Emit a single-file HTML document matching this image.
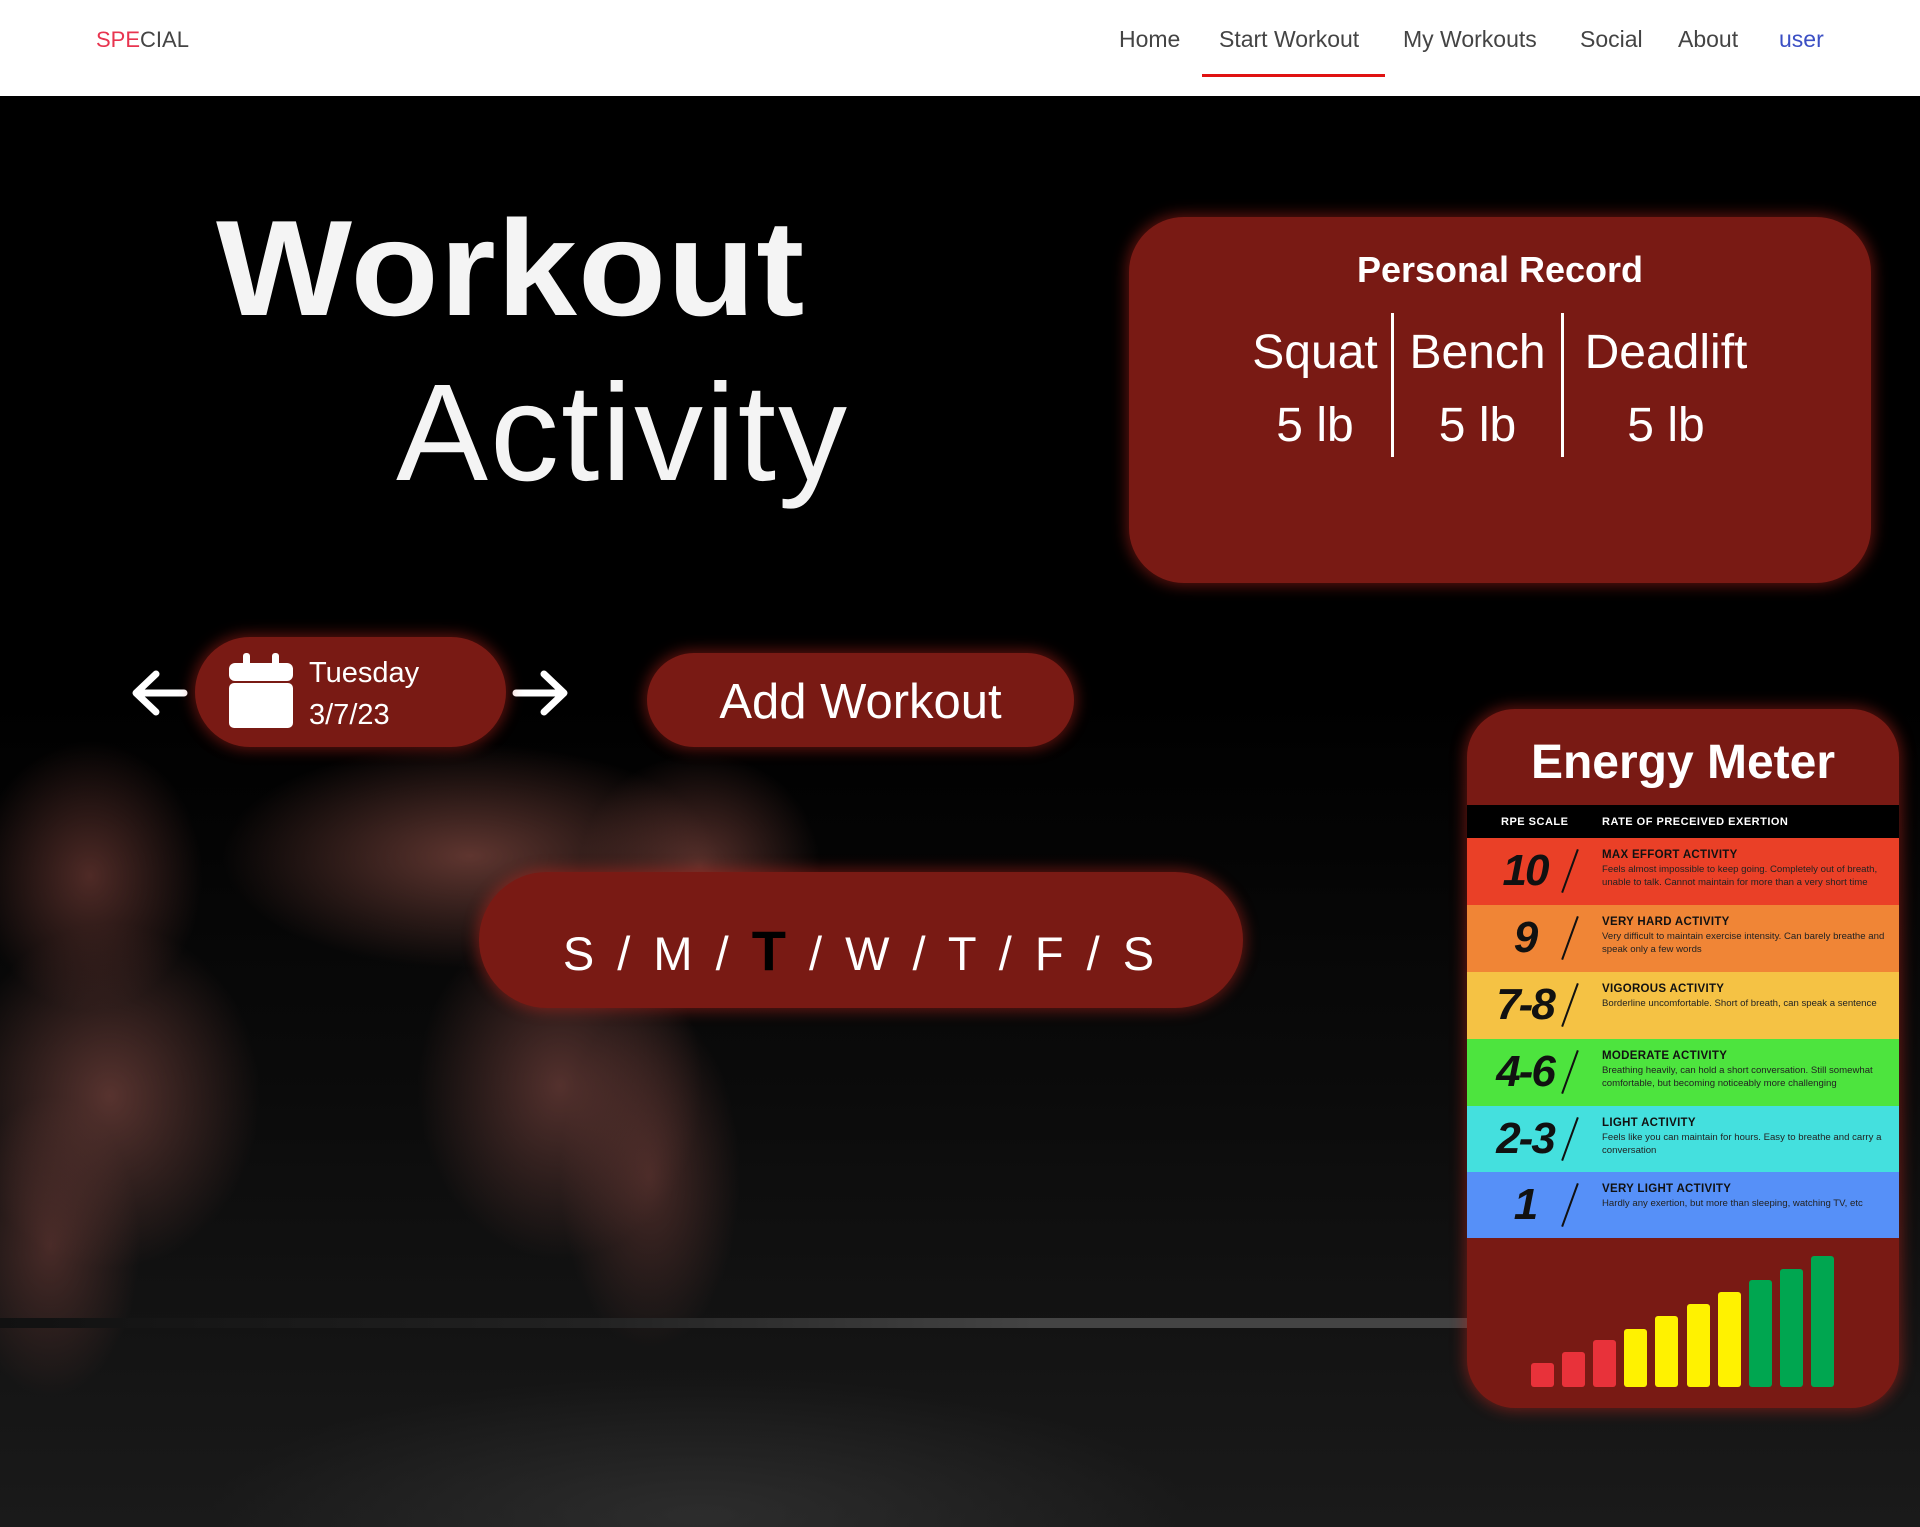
<!DOCTYPE html>
<html><head><meta charset="utf-8">
<style>
*{margin:0;padding:0;box-sizing:border-box}
body{width:1920px;height:1527px;overflow:hidden;font-family:"Liberation Sans",sans-serif;background:#000;position:relative}
.a{position:absolute}
nav{position:absolute;left:0;top:0;width:1920px;height:96px;background:#fff}
nav .i{position:absolute;top:26px;font-size:23px;color:#444;white-space:nowrap}
.bg{position:absolute;left:0;top:96px;width:1920px;height:1431px;background:
radial-gradient(ellipse 330px 150px at 470px 760px,rgba(125,70,62,.75),transparent 75%),
radial-gradient(ellipse 160px 150px at 700px 770px,rgba(120,65,58,.7),transparent 75%),
radial-gradient(ellipse 150px 180px at 90px 780px,rgba(110,58,52,.7),transparent 75%),
radial-gradient(ellipse 200px 230px at 110px 1000px,rgba(120,68,62,.7),transparent 75%),
radial-gradient(ellipse 190px 230px at 560px 990px,rgba(115,65,60,.7),transparent 75%),
radial-gradient(ellipse 120px 230px at 650px 1080px,rgba(110,60,55,.6),transparent 75%),
radial-gradient(ellipse 120px 200px at 50px 1150px,rgba(110,60,55,.6),transparent 75%),
radial-gradient(ellipse 700px 200px at 700px 1420px,rgba(60,60,60,.55),transparent 70%),
radial-gradient(ellipse 90px 40px at 90px 1480px,rgba(170,170,170,.6),transparent 70%),
radial-gradient(ellipse 90px 40px at 540px 1490px,rgba(170,170,170,.6),transparent 70%),
linear-gradient(#000 0,#000 600px,#0b0b0b 1000px,#1a1a1a 1431px)}
.bar{position:absolute;left:0;top:1318px;width:1480px;height:10px;background:linear-gradient(90deg,#111,#222 40%,#444 70%,#444)}
.red{background:#791a14;box-shadow:0 0 14px 3px rgba(200,40,30,.45)}
.pill{border-radius:60px}
.rows div.r{position:absolute;left:0;width:432px;height:67px}
.num{position:absolute;left:0;width:116px;text-align:center;font-weight:900;font-style:italic;font-size:44px;color:#111;top:8px;letter-spacing:-2px}
.sl{position:absolute;left:102px;top:10px;width:2px;height:46px;background:#111;transform:rotate(20deg)}
.tt{position:absolute;left:135px;top:11px;font-size:11.5px;font-weight:bold;color:#111;letter-spacing:.3px}
.dd{position:absolute;left:135px;top:25px;font-size:9.6px;color:#222;line-height:13px;width:290px}
.b{position:absolute;bottom:0;width:23px;border-radius:3px}
</style></head><body>
<nav>
<div class="i" style="left:96px;top:27px;font-size:22px;color:#444"><span style="color:#e8344f">SPE</span>CIAL</div>
<div class="i" style="left:1119px">Home</div>
<div class="i" style="left:1219px">Start Workout</div>
<div class="a" style="left:1202px;top:74px;width:183px;height:3px;background:#e01212"></div>
<div class="i" style="left:1403px">My Workouts</div>
<div class="i" style="left:1580px">Social</div>
<div class="i" style="left:1678px">About</div>
<div class="i" style="left:1779px;color:#3b4fc4">user</div>
</nav>
<div class="bg"></div>
<div class="bar"></div>

<div class="a" style="left:216px;top:200px;font-size:136px;font-weight:900;color:#f4f4f4;line-height:1;letter-spacing:1px;transform:scaleX(1.06);transform-origin:left">Workout</div>
<div class="a" style="left:396px;top:364px;font-size:138px;color:#f4f4f4;line-height:1;letter-spacing:2px">Activity</div>

<div class="a red" style="left:1129px;top:217px;width:742px;height:366px;border-radius:55px"></div>
<div class="a" style="left:1129px;top:249px;width:742px;text-align:center;font-size:36px;font-weight:bold;color:#fff">Personal Record</div>
<div class="a" style="left:1391px;top:313px;width:3px;height:144px;background:#fff"></div>
<div class="a" style="left:1561px;top:313px;width:3px;height:144px;background:#fff"></div>
<div class="a" style="left:1240px;top:325px;width:150px;text-align:center;font-size:48px;color:#fff">Squat</div>
<div class="a" style="left:1394px;top:325px;width:167px;text-align:center;font-size:48px;color:#fff">Bench</div>
<div class="a" style="left:1564px;top:325px;width:204px;text-align:center;font-size:48px;color:#fff">Deadlift</div>
<div class="a" style="left:1240px;top:398px;width:150px;text-align:center;font-size:48px;color:#fff">5 lb</div>
<div class="a" style="left:1394px;top:398px;width:167px;text-align:center;font-size:48px;color:#fff">5 lb</div>
<div class="a" style="left:1564px;top:398px;width:204px;text-align:center;font-size:48px;color:#fff">5 lb</div>

<svg class="a" style="left:130px;top:668px" width="60" height="50" viewBox="0 0 60 50"><path d="M54 25H8M26 6L6 25L26 44" stroke="#fff" stroke-width="7" fill="none" stroke-linecap="round" stroke-linejoin="round"/></svg>
<svg class="a" style="left:510px;top:668px" width="60" height="50" viewBox="0 0 60 50"><path d="M6 25H52M34 6L54 25L34 44" stroke="#fff" stroke-width="7" fill="none" stroke-linecap="round" stroke-linejoin="round"/></svg>
<div class="a red pill" style="left:195px;top:637px;width:311px;height:110px"></div>
<svg class="a" style="left:229px;top:653px" width="64" height="75" viewBox="0 0 64 75"><rect x="14" y="0" width="7" height="16" rx="3" fill="#fff"/><rect x="43" y="0" width="7" height="16" rx="3" fill="#fff"/><rect x="0" y="10" width="64" height="18" rx="6" fill="#fff"/><rect x="0" y="30" width="64" height="45" rx="5" fill="#fff"/></svg>
<div class="a" style="left:309px;top:657px;font-size:29px;color:#fff">Tuesday</div>
<div class="a" style="left:309px;top:699px;font-size:29px;color:#fff">3/7/23</div>

<div class="a red pill" style="left:647px;top:653px;width:427px;height:94px"></div>
<div class="a" style="left:647px;top:674px;width:427px;text-align:center;font-size:49px;color:#fff">Add Workout</div>

<div class="a red" style="left:479px;top:872px;width:764px;height:136px;border-radius:68px"></div>
<div class="a" style="left:479px;top:918px;width:764px;text-align:center;font-size:47px;color:#fff;letter-spacing:5px;white-space:nowrap">S / M / <b style="color:#000;font-size:56px">T</b> / W / T / F / S</div>

<div class="a red" style="left:1467px;top:709px;width:432px;height:699px;border-radius:48px;overflow:hidden">
<div class="a" style="left:0;top:26px;width:432px;text-align:center;font-size:48px;font-weight:bold;color:#fff">Energy Meter</div>
<div class="a" style="left:0;top:96px;width:432px;height:33px;background:#000"></div>
<div class="a" style="left:34px;top:107px;font-size:11px;font-weight:bold;color:#fff;letter-spacing:.5px">RPE SCALE</div>
<div class="a" style="left:135px;top:107px;font-size:11px;font-weight:bold;color:#fff;letter-spacing:.5px">RATE OF PRECEIVED EXERTION</div>
<div class="rows">
<div class="r" style="top:129px;background:#ea4027"><div class="num">10</div><div class="sl"></div><div class="tt">MAX EFFORT ACTIVITY</div><div class="dd">Feels almost impossible to keep going. Completely out of breath, unable to talk. Cannot maintain for more than a very short time</div></div>
<div class="r" style="top:196px;background:#f08536"><div class="num">9</div><div class="sl"></div><div class="tt">VERY HARD ACTIVITY</div><div class="dd">Very difficult to maintain exercise intensity. Can barely breathe and speak only a few words</div></div>
<div class="r" style="top:263px;background:#f5c244"><div class="num">7-8</div><div class="sl"></div><div class="tt">VIGOROUS ACTIVITY</div><div class="dd">Borderline uncomfortable. Short of breath, can speak a sentence</div></div>
<div class="r" style="top:330px;background:#4de43e"><div class="num">4-6</div><div class="sl"></div><div class="tt">MODERATE ACTIVITY</div><div class="dd">Breathing heavily, can hold a short conversation. Still somewhat comfortable, but becoming noticeably more challenging</div></div>
<div class="r" style="top:397px;background:#44e0de"><div class="num">2-3</div><div class="sl"></div><div class="tt">LIGHT ACTIVITY</div><div class="dd">Feels like you can maintain for hours. Easy to breathe and carry a conversation</div></div>
<div class="r" style="top:463px;background:#5690f8;height:66px"><div class="num">1</div><div class="sl"></div><div class="tt">VERY LIGHT ACTIVITY</div><div class="dd">Hardly any exertion, but more than sleeping, watching TV, etc</div></div>
</div>
<div class="a" style="left:64px;top:540px;width:320px;height:138px">
<div class="b" style="left:0;height:24px;background:#e8323a"></div>
<div class="b" style="left:31px;height:35px;background:#e8323a"></div>
<div class="b" style="left:62px;height:47px;background:#e8323a"></div>
<div class="b" style="left:93px;height:58px;background:#fff200"></div>
<div class="b" style="left:124px;height:71px;background:#fff200"></div>
<div class="b" style="left:156px;height:83px;background:#fff200"></div>
<div class="b" style="left:187px;height:95px;background:#fff200"></div>
<div class="b" style="left:218px;height:107px;background:#00a650"></div>
<div class="b" style="left:249px;height:118px;background:#00a650"></div>
<div class="b" style="left:280px;height:131px;background:#00a650"></div>
</div>
</div>
</body></html>
